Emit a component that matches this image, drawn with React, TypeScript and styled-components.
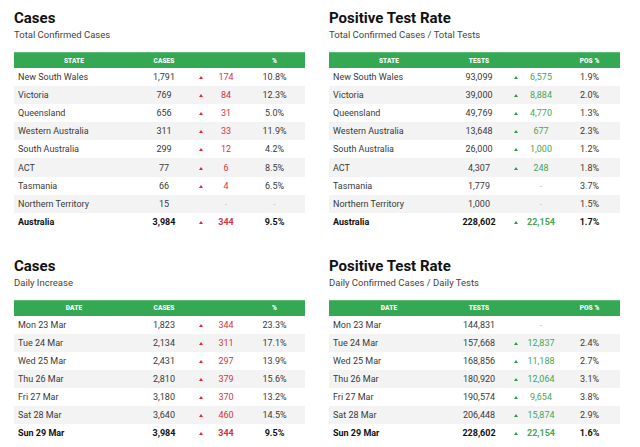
import React from "react";
import styled, { createGlobalStyle } from "styled-components";

type Trend = "up" | "none";

interface RowData {
  label: string;
  value: string;
  delta: string;
  pct: string;
  trend: Trend;
  total?: boolean;
}

interface Panel {
  title: string;
  subtitle: string;
  cols: [string, string, string];
  tone: "red" | "green";
  rows: RowData[];
}

const r = (label: string, value: string, delta: string, pct: string, total = false): RowData => ({
  label,
  value,
  delta,
  pct,
  trend: delta === "-" ? "none" : "up",
  total,
});

const panels: Panel[] = [
  {
    title: "Cases",
    subtitle: "Total Confirmed Cases",
    cols: ["State", "Cases", "%"],
    tone: "red",
    rows: [
      r("New South Wales", "1,791", "174", "10.8%"),
      r("Victoria", "769", "84", "12.3%"),
      r("Queensland", "656", "31", "5.0%"),
      r("Western Australia", "311", "33", "11.9%"),
      r("South Australia", "299", "12", "4.2%"),
      r("ACT", "77", "6", "8.5%"),
      r("Tasmania", "66", "4", "6.5%"),
      r("Northern Territory", "15", "-", "-"),
      r("Australia", "3,984", "344", "9.5%", true),
    ],
  },
  {
    title: "Positive Test Rate",
    subtitle: "Total Confirmed Cases / Total Tests",
    cols: ["State", "Tests", "Pos %"],
    tone: "green",
    rows: [
      r("New South Wales", "93,099", "6,575", "1.9%"),
      r("Victoria", "39,000", "8,884", "2.0%"),
      r("Queensland", "49,769", "4,770", "1.3%"),
      r("Western Australia", "13,648", "677", "2.3%"),
      r("South Australia", "26,000", "1,000", "1.2%"),
      r("ACT", "4,307", "248", "1.8%"),
      r("Tasmania", "1,779", "-", "3.7%"),
      r("Northern Territory", "1,000", "-", "1.5%"),
      r("Australia", "228,602", "22,154", "1.7%", true),
    ],
  },
  {
    title: "Cases",
    subtitle: "Daily Increase",
    cols: ["Date", "Cases", "%"],
    tone: "red",
    rows: [
      r("Mon 23 Mar", "1,823", "344", "23.3%"),
      r("Tue 24 Mar", "2,134", "311", "17.1%"),
      r("Wed 25 Mar", "2,431", "297", "13.9%"),
      r("Thu 26 Mar", "2,810", "379", "15.6%"),
      r("Fri 27 Mar", "3,180", "370", "13.2%"),
      r("Sat 28 Mar", "3,640", "460", "14.5%"),
      r("Sun 29 Mar", "3,984", "344", "9.5%", true),
    ],
  },
  {
    title: "Positive Test Rate",
    subtitle: "Daily Confirmed Cases / Daily Tests",
    cols: ["Date", "Tests", "Pos %"],
    tone: "green",
    rows: [
      r("Mon 23 Mar", "144,831", "-", ""),
      r("Tue 24 Mar", "157,668", "12,837", "2.4%"),
      r("Wed 25 Mar", "168,856", "11,188", "2.7%"),
      r("Thu 26 Mar", "180,920", "12,064", "3.1%"),
      r("Fri 27 Mar", "190,574", "9,654", "3.8%"),
      r("Sat 28 Mar", "206,448", "15,874", "2.9%"),
      r("Sun 29 Mar", "228,602", "22,154", "1.6%", true),
    ],
  },
];

const tones = {
  red: { text: "#d2343f", arrow: "#e0262f" },
  green: { text: "#47a653", arrow: "#2f9a45" },
};

const App: React.FC = () => {
  return (
    <>
      <GlobalStyle />
      <Page>
        {panels.map((p, i) => (
          <Section key={i}>
            <Title>{p.title}</Title>
            <Subtitle>{p.subtitle}</Subtitle>
            <Table>
              <HeadRow>
                <HeadCell>{p.cols[0]}</HeadCell>
                <HeadCell>{p.cols[1]}</HeadCell>
                <HeadCell />
                <HeadCell />
                <HeadCell>{p.cols[2]}</HeadCell>
              </HeadRow>
              {p.rows.map((row) => (
                <Row key={row.label} $total={row.total}>
                  <Label>{row.label}</Label>
                  <Cell>{row.value}</Cell>
                  <Cell>{row.trend === "up" && <Arrow $color={tones[p.tone].arrow} />}</Cell>
                  <Delta $color={row.trend === "up" ? tones[p.tone].text : "#c4c4c4"}>{row.delta}</Delta>
                  <Cell $muted={row.pct === "-"}>{row.pct}</Cell>
                </Row>
              ))}
            </Table>
          </Section>
        ))}
      </Page>
    </>
  );
};

export default App;

const GlobalStyle = createGlobalStyle`
  body {
    margin: 0;
    background: #fff;
    font-family: Roboto, "Liberation Sans", sans-serif;
    color: #3a3a3a;
  }
`;

const Page = styled.div`
  display: grid;
  grid-template-columns: 291px 291px;
  column-gap: 24px;
  row-gap: 26px;
  padding: 9px 0 0 14px;
`;

const Section = styled.div`
  display: flex;
  flex-direction: column;
`;

const Title = styled.h2`
  margin: 0;
  font-size: 15px;
  line-height: 18px;
  font-weight: 700;
  color: #111;
`;

const Subtitle = styled.div`
  margin: 1px 0 10px;
  font-size: 9.5px;
  line-height: 14px;
  color: #444;
`;

const Table = styled.div`
  display: flex;
  flex-direction: column;
`;

const columns = "120px 60px 14px 36px 61px";

const HeadRow = styled.div`
  display: grid;
  grid-template-columns: ${columns};
  height: 16px;
  align-items: center;
  background: #34a853;
  border-top: 1px solid #5dbb74;
  box-sizing: border-box;
`;

const HeadCell = styled.div`
  text-align: center;
  font-size: 6.5px;
  font-weight: 900;
  text-transform: uppercase;
  color: #fff;
  letter-spacing: 0.1px;
`;

const Row = styled.div<{ $total?: boolean }>`
  display: grid;
  grid-template-columns: ${columns};
  height: 18.1px;
  align-items: center;
  font-size: 9px;
  font-weight: ${(p) => (p.$total ? 700 : 400)};
  color: ${(p) => (p.$total ? "#111" : "#3a3a3a")};
  &:nth-child(odd) {
    background: #f3f3f3;
  }
`;

const Label = styled.div`
  padding-left: 4px;
  white-space: nowrap;
`;

const Cell = styled.div<{ $muted?: boolean }>`
  text-align: center;
  display: flex;
  justify-content: center;
  align-items: center;
  color: ${(p) => (p.$muted ? "#c4c4c4" : "inherit")};
`;

const Delta = styled.div<{ $color: string }>`
  text-align: center;
  color: ${(p) => p.$color};
`;

const Arrow = styled.span<{ $color: string }>`
  width: 0;
  height: 0;
  border-left: 2px solid transparent;
  border-right: 2px solid transparent;
  border-bottom: 3px solid ${(p) => p.$color};
  margin-top: 1px;
`;
